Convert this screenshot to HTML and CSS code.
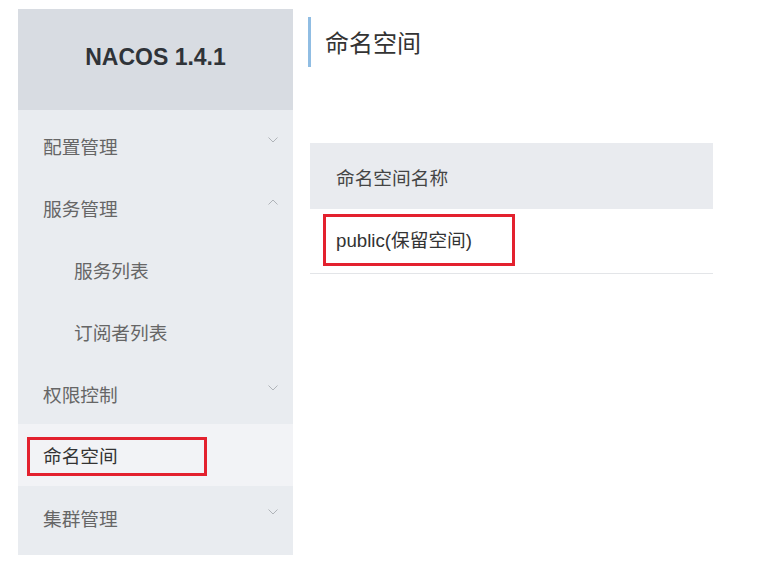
FILE: index.html
```html
<!DOCTYPE html>
<html lang="zh-CN">
<head>
<meta charset="utf-8">
<title>Nacos</title>
<link rel="stylesheet" href="styles.css">
</head>
<body>
<div class="page">
  <aside class="sidebar">
    <div class="brand">NACOS 1.4.1</div>
    <ul class="menu">
      <li class="item"><span>配置管理</span><svg class="chev" viewBox="0 0 10 6"><path d="M0.5 0.5 L5 5 L9.5 0.5"/></svg></li>
      <li class="item"><span>服务管理</span><svg class="chev" viewBox="0 0 10 6"><path d="M0.5 5.5 L5 1 L9.5 5.5"/></svg></li>
      <li class="item sub"><span>服务列表</span></li>
      <li class="item sub"><span>订阅者列表</span></li>
      <li class="item"><span>权限控制</span><svg class="chev" viewBox="0 0 10 6"><path d="M0.5 0.5 L5 5 L9.5 0.5"/></svg></li>
      <li class="item active"><span class="mark">命名空间</span></li>
      <li class="item"><span>集群管理</span><svg class="chev" viewBox="0 0 10 6"><path d="M0.5 0.5 L5 5 L9.5 0.5"/></svg></li>
    </ul>
  </aside>
  <main class="main">
    <h1 class="title">命名空间</h1>
    <table class="table">
      <thead><tr><th>命名空间名称</th></tr></thead>
      <tbody><tr><td><span class="mark2">public(保留空间)</span></td></tr></tbody>
    </table>
  </main>
</div>
</body>
</html>
```

FILE: styles.css
```css
* { box-sizing: border-box; }
html, body { margin: 0; padding: 0; background: #fff; }
body {
  font-family: "Liberation Sans", "Noto Sans CJK SC", sans-serif;
  color: #333;
}
.page {
  display: flex;
  align-items: flex-start;
  padding: 9px 0 0 18px;
}
.sidebar {
  width: 275px;
  flex: none;
  background: #e9ecf0;
}
.brand {
  height: 101px;
  background: #d8dce2;
  display: flex;
  align-items: center;
  justify-content: center;
  font-family: "Liberation Sans", sans-serif;
  font-weight: bold;
  font-size: 23px;
  color: #2f3338;
  padding-bottom: 4px;
}
.menu {
  list-style: none;
  margin: 0;
  padding: 4px 0 7px;
}
.item {
  height: 62px;
  display: flex;
  align-items: center;
  justify-content: space-between;
  padding: 0 15px 0 25px;
  font-size: 18.7px;
  color: #666;
}
.item.sub { padding-left: 56px; }
.chev {
  width: 10px;
  height: 6px;
  fill: none;
  stroke: #b0b4b9;
  stroke-width: 1;
  margin-top: -10px;
}
.item.active {
  background: #f2f3f6;
  padding-left: 9px;
  padding-top: 2px;
}
.mark {
  display: inline-block;
  width: 180px;
  height: 39px;
  line-height: 33px;
  border: 3px solid #e3212e;
  padding-left: 13px;
  color: #333;
}
.main {
  margin-left: 15px;
  flex: none;
  width: 405px;
}
.title {
  margin: 8px 0 0;
  height: 50px;
  border-left: 3px solid #90bde3;
  padding-left: 14px;
  font-size: 24px;
  font-weight: normal;
  line-height: 50px;
  color: #333;
  font-family: "Noto Sans CJK SC", sans-serif;
}
.table {
  margin: 76px 0 0 2px;
  width: 403px;
  border-collapse: collapse;
  font-size: 18.7px;
}
.table th {
  height: 66px;
  background: #e9ebef;
  text-align: left;
  font-weight: normal;
  color: #444;
  padding: 0 0 0 26px;
}
.table td {
  height: 64px;
  padding: 0 0 2px 13px;
  border-bottom: 1px solid #e3e5e8;
  color: #333;
}
.mark2 {
  display: inline-block;
  width: 192px;
  height: 52px;
  line-height: 48px;
  border: 3px solid #e3212e;
  padding-left: 10px;
}
```
